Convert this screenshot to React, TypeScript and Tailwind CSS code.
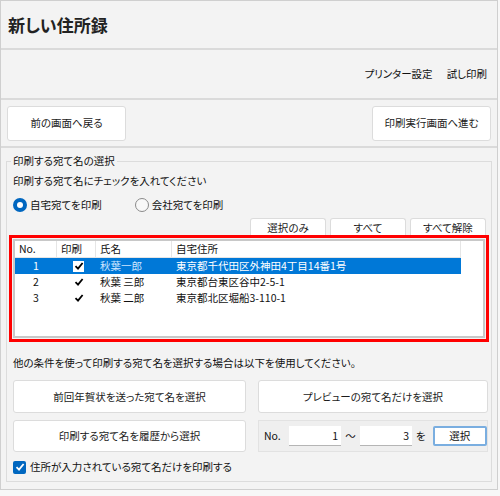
import React from "react";

const rows = [
  { no: "1", name: "秋葉一郎", addr: "東京都千代田区外神田4丁目14番1号", selected: true },
  { no: "2", name: "秋葉 三郎", addr: "東京都台東区谷中2-5-1", selected: false },
  { no: "3", name: "秋葉 二郎", addr: "東京都北区堀船3-110-1", selected: false },
];

function Btn({ children, className = "" }: { children: React.ReactNode; className?: string }) {
  return (
    <button
      type="button"
      className={`flex items-center justify-center rounded-[3px] border border-[#dcdcdc] bg-white text-[10.5px] text-[#1b1b1b] ${className}`}
    >
      {children}
    </button>
  );
}

function Check({ dark = false }: { dark?: boolean }) {
  return (
    <svg width="10" height="10" viewBox="0 0 10 10">
      <path d="M1.5 5.2 L4 7.6 L8.6 2" fill="none" stroke={dark ? "#000" : "#fff"} strokeWidth="1.8" />
    </svg>
  );
}

export default function App() {
  return (
    <div className="h-[496px] w-[500px] overflow-hidden bg-[#f7f7f7] font-['Noto_Sans_CJK_JP','Noto_Sans',sans-serif] [font-feature-settings:'palt']">
      <div className="flex h-[490px] w-[498px] flex-col border border-[#cfcfcf] bg-[#f3f3f3] text-[10.5px] text-[#111]">
        {/* タイトル */}
        <div className="flex h-[49px] shrink-0 items-center border-b-2 border-[#dadada] pl-[7px]">
          <h1 className="text-[17px] font-bold text-[#222]">新しい住所録</h1>
        </div>

        {/* メニュー */}
        <div className="flex h-[50px] shrink-0 items-center justify-end gap-[14px] border-b-2 border-[#dadada] pr-[10px]">
          <span>プリンター設定</span>
          <span>試し印刷</span>
        </div>

        {/* 画面遷移 */}
        <div className="flex h-[48px] shrink-0 items-center justify-between border-b-2 border-[#dadada] px-[6px]">
          <Btn className="h-[35px] w-[119px]">前の画面へ戻る</Btn>
          <Btn className="h-[35px] w-[119px]">印刷実行画面へ進む</Btn>
        </div>

        {/* 宛て名の選択 */}
        <div className="relative mx-[5px] mt-[13px] flex h-[321px] flex-col border border-[#dcdcdc] px-[2px]">
          <span className="absolute -top-[9px] left-[4px] bg-[#f3f3f3] px-[2px] leading-[16px]">
            印刷する宛て名の選択
          </span>
          <p className="mt-[11px] pl-[4px] leading-[16px]">印刷する宛て名にチェックを入れてください</p>

          <div className="mt-[8px] flex items-center pl-[4px] leading-[16px]">
            <span className="flex h-[14px] w-[14px] items-center justify-center rounded-full bg-[#0067c0]">
              <span className="h-[6px] w-[6px] rounded-full bg-white" />
            </span>
            <span className="ml-[3px]">自宅宛てを印刷</span>
            <span className="ml-[33px] h-[14px] w-[14px] rounded-full border border-[#8a8a8a] bg-[#f8f8f8]" />
            <span className="ml-[3px]">会社宛てを印刷</span>
          </div>

          <div className="mt-[5px] flex justify-end gap-[4px] pr-[3px]">
            <Btn className="h-[17px] w-[76px] rounded-b-none border-b-0 pt-[2px]">選択のみ</Btn>
            <Btn className="h-[17px] w-[76px] rounded-b-none border-b-0 pt-[2px]">すべて</Btn>
            <Btn className="h-[17px] w-[76px] rounded-b-none border-b-0 pt-[2px]">すべて解除</Btn>
          </div>

          {/* 一覧 */}
          <div className="h-[107px] border-[3px] border-[#ff0000] p-[1px]">
            <div className="h-full border-2 border-[#c8c8c8] bg-white">
              <div className="flex h-[17px] w-[446px] items-center border-b border-[#e5e5e5] leading-[16px]">
                <span className="w-[42px] border-r border-[#e5e5e5] pl-[4px]">No.</span>
                <span className="w-[39px] border-r border-[#e5e5e5] pl-[4px]">印刷</span>
                <span className="w-[76px] border-r border-[#e5e5e5] pl-[4px]">氏名</span>
                <span className="flex-1 border-r border-[#e5e5e5] pl-[4px]">自宅住所</span>
              </div>
              {rows.map((r) => (
                <div
                  key={r.no}
                  className={`flex h-[16px] w-[446px] items-center leading-[16px] ${
                    r.selected ? "bg-[#0078d7] text-white" : ""
                  }`}
                >
                  <span className="w-[42px] pl-[18px]">{r.no}</span>
                  <span className="flex w-[39px] justify-center pl-[4px]">
                    <span className="flex h-[11px] w-[11px] items-center justify-center bg-white">
                      <Check dark />
                    </span>
                  </span>
                  <span className={`w-[76px] pl-[4px] ${r.selected ? "text-[#cfe6ff]" : ""}`}>{r.name}</span>
                  <span className="flex-1 pl-[4px]">{r.addr}</span>
                </div>
              ))}
            </div>
          </div>

          <p className="mt-[13px] pl-[4px] leading-[16px]">
            他の条件を使って印刷する宛て名を選択する場合は以下を使用してください。
          </p>

          <div className="mt-[9px] grid grid-cols-[233px_230px] justify-between gap-y-[7px] pl-[4px] pr-[1px]">
            <Btn className="h-[33px]">前回年賀状を送った宛て名を選択</Btn>
            <Btn className="h-[33px]">プレビューの宛て名だけを選択</Btn>
            <Btn className="h-[32px]">印刷する宛て名を履歴から選択</Btn>
            <div className="flex h-[32px] items-center border border-[#e2e2e2] bg-[#efefef] pl-[5px]">
              <span>No.</span>
              <span className="ml-[8px] flex h-[20px] w-[54px] items-center justify-end border-b border-[#b5b5b5] bg-white pr-[3px]">
                1
              </span>
              <span className="ml-[4px]">～</span>
              <span className="ml-[4px] flex h-[20px] w-[54px] items-center justify-end border-b border-[#b5b5b5] bg-white pr-[3px]">
                3
              </span>
              <span className="ml-[4px]">を</span>
              <button
                type="button"
                className="ml-[7px] flex h-[20px] w-[56px] items-center justify-center rounded-[2px] border-2 border-[#7aaee0] bg-white"
              >
                選択
              </button>
            </div>
          </div>

          <div className="mt-[7px] flex items-center pl-[4px] leading-[16px]">
            <span className="flex h-[13px] w-[13px] items-center justify-center rounded-[2px] bg-[#0067c0]">
              <Check />
            </span>
            <span className="ml-[4px]">住所が入力されている宛て名だけを印刷する</span>
          </div>
        </div>
      </div>
    </div>
  );
}
